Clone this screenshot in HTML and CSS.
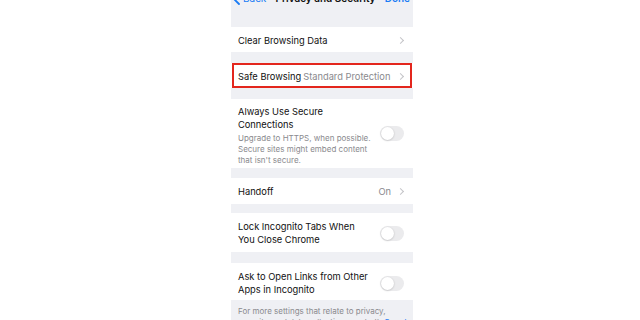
FILE: index.html
```html
<!DOCTYPE html>
<html>
<head>
<meta charset="utf-8">
<link rel="stylesheet" href="styles.css">
</head>
<body>
<div class="phone">
  <div class="header">
    <div class="nav">
      <span class="back"><svg class="back-chev" width="7" height="12" viewBox="0 0 7 12"><path d="M6 1 L1 6 L6 11" fill="none" stroke="#1a7cf5" stroke-width="1.8" stroke-linecap="round" stroke-linejoin="round"/></svg>Back</span>
      <span class="title">Privacy and Security</span>
      <span class="done">Done</span>
    </div>
  </div>

  <div class="row r1">
    <span class="label">Clear Browsing Data</span>
    <span class="chev"></span>
  </div>
  <div class="gap g11"></div>

  <div class="row r1 highlighted">
    <span class="label">Safe Browsing</span>
    <span class="value">Standard Protection</span>
    <span class="chev"></span>
    <div class="redbox"></div>
  </div>
  <div class="gap g11"></div>

  <div class="row r-secure">
    <div class="texts">
      <div class="label2">Always Use Secure<br>Connections</div>
      <div class="sub">Upgrade to HTTPS, when possible.<br>Secure sites might embed content<br>that isn't secure.</div>
    </div>
    <span class="toggle t-secure"></span>
  </div>
  <div class="gap g10"></div>

  <div class="row r-hand">
    <span class="label">Handoff</span>
    <span class="value">On</span>
    <span class="chev"></span>
  </div>
  <div class="gap g9"></div>

  <div class="row r-lock">
    <div class="label2">Lock Incognito Tabs When<br>You Close Chrome</div>
    <span class="toggle"></span>
  </div>
  <div class="gap g11"></div>

  <div class="row r-ask">
    <div class="label2">Ask to Open Links from Other<br>Apps in Incognito</div>
    <span class="toggle"></span>
  </div>

  <div class="footer">For more settings that relate to privacy,<br>security, and data collection, see both <span class="link">Google</span></div>
</div>
</body>
</html>
```

FILE: styles.css
```css
html, body {
  margin: 0;
  padding: 0;
  background: #ffffff;
  height: 320px;
  overflow: hidden;
}
body {
  font-family: Inter, "Noto Sans", sans-serif;
  color: #111;
}
.phone {
  width: 182px;
  margin-left: 231px;
  background: #eff0f4;
  height: 320px;
  overflow: hidden;
}
.header {
  height: 27px;
  background: #eff0f4;
  overflow: hidden;
}
.nav {
  margin-top: -8px;
  height: 13px;
  line-height: 13px;
  font-size: 10px;
  display: flex;
  align-items: center;
  padding: 0 3px 0 2px;
}
.back {
  color: #1a7cf5;
  display: flex;
  align-items: center;
  gap: 3px;
}
.title {
  flex: 1;
  text-align: center;
  font-weight: 600;
  color: #111;
  white-space: nowrap;
}
.done {
  color: #1a7cf5;
  font-weight: 600;
}
.row {
  background: #fff;
  display: flex;
  align-items: center;
  padding: 0 9px 0 7px;
  font-size: 9.3px;
  position: relative;
  box-sizing: border-box;
}
.r1 { height: 25px; padding-top: 1px; }
.r-hand { height: 26px; padding-top: 1px; }
.label { flex: 1; white-space: nowrap; }
.highlighted .label { flex: none; }
.value {
  color: #8a8a8e;
  white-space: nowrap;
}
.highlighted .value { flex: 1; margin-left: 2px; }
.chev {
  width: 4px;
  height: 4px;
  border-top: 1.2px solid #c4c4c8;
  border-right: 1.2px solid #c4c4c8;
  transform: rotate(45deg);
  margin-left: 7px;
  margin-right: 1px;
}
.redbox {
  position: absolute;
  left: 1px;
  right: 1px;
  top: 0;
  bottom: 0;
  border: 2px solid #e3261d;
}
.gap { background: #eff0f4; }
.g11 { height: 11px; }
.g10 { height: 10px; }
.g9 { height: 9px; }
.r-secure {
  height: 69px;
  align-items: flex-start;
  padding-top: 7px;
}
.texts { flex: 1; }
.label2 {
  flex: 1;
  line-height: 12.5px;
  font-size: 9.3px;
  white-space: nowrap;
}
.sub {
  font-size: 8px;
  line-height: 11px;
  color: #8a8a8e;
  white-space: nowrap;
  margin-top: 2px;
}
.toggle {
  width: 24px;
  height: 15px;
  border-radius: 8px;
  background: #ebebed;
  position: relative;
  flex: none;
}
.toggle::after {
  content: "";
  position: absolute;
  left: 1px;
  top: 1px;
  width: 13px;
  height: 13px;
  border-radius: 50%;
  background: #fff;
  box-shadow: 0 0.5px 2px rgba(0,0,0,0.22);
}
.t-secure { margin-top: 20px; }
.r-lock { height: 39px; padding-top: 2px; }
.r-ask { height: 37px; padding-top: 4px; }
.footer {
  padding: 6px 7px 0 7px;
  font-size: 8px;
  line-height: 11px;
  color: #8a8a8e;
  white-space: nowrap;
}
.link { color: #1a7cf5; }
```
